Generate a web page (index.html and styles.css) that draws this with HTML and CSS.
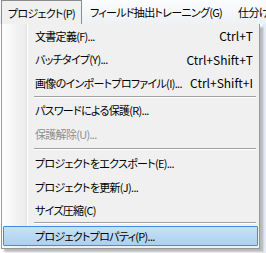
FILE: index.html
```html
<!DOCTYPE html>
<html lang="ja">
<head>
	<meta charset="UTF-8">
	<title>プロジェクトメニュー</title>
	<link rel="stylesheet" href="styles.css">
</head>
<body>
	<nav class="menubar">
		<span class="top open">プロジェクト(P)</span>
		<span class="top">フィールド抽出トレーニング(G)</span>
		<span class="top">仕分け</span>
	</nav>
	<div class="stage">
		<ul class="menu">
			<li class="item"><span>文書定義(F)...</span><span class="key">Ctrl+T</span></li>
			<li class="item"><span>バッチタイプ(Y)...</span><span class="key">Ctrl+Shift+T</span></li>
			<li class="item"><span>画像のインポートプロファイル(I)...</span><span class="key">Ctrl+Shift+I</span></li>
			<li class="sep"></li>
			<li class="item"><span>パスワードによる保護(R)...</span></li>
			<li class="item off"><span>保護解除(U)...</span></li>
			<li class="sep wide"></li>
			<li class="item"><span>プロジェクトをエクスポート(E)...</span></li>
			<li class="item"><span>プロジェクトを更新(J)...</span></li>
			<li class="item"><span>サイズ圧縮(C)</span></li>
			<li class="sep thin"></li>
			<li class="item hot"><span>プロジェクトプロパティ(P)...</span></li>
		</ul>
	</div>
</body>
</html>
```

FILE: styles.css
```css
* {
	margin: 0;
	padding: 0;
	box-sizing: border-box;
}

body {
	width: 266px;
	height: 253px;
	overflow: hidden;
	background: #fff;
	font: 11px "Noto Sans CJK JP", "Noto Sans", sans-serif;
	font-feature-settings: "palt";
	letter-spacing: -0.7px;
	color: #000;
}

.menubar {
	display: flex;
	height: 24px;
	padding-left: 1px;
	background: linear-gradient(#fbfcfd, #eef1f5);
}

.top {
	display: flex;
	align-items: center;
	padding: 0 7px;
	white-space: nowrap;
	border: 1px solid transparent;
}

.top.open {
	background: #f0f0f0;
	border-color: #8b8b8b;
	border-bottom: none;
	padding: 0 6px;
}

.stage {
	padding: 0 0 0 1px;
	height: 229px;
	background: linear-gradient(90deg, #fff 262px, #e5eef7 262px);
}

.menu {
	list-style: none;
	width: 259px;
	height: 225px;
	border: 1px solid #979797;
	border-top: none;
	padding: 0 1px;
	background: linear-gradient(90deg, #fdfdfd 0, #ececec 24px, #e2e3e3 24px, #e2e3e3 25px, #fff 25px, #fff 26px, #f0f0f0 26px);
	box-shadow: 3px 3px 2px rgba(0, 0, 0, .28);
}

.item {
	display: flex;
	justify-content: space-between;
	align-items: center;
	gap: 8px;
	height: 23.5px;
	padding: 0 4px 0 31px;
	white-space: nowrap;
	border: 1px solid transparent;
	border-radius: 1px;
}

.key {
	font-size: 12px;
	letter-spacing: 0;
}

.off {
	color: #8d8d8d;
}

.hot {
	height: 20px;
	margin-top: 1px;
	background: linear-gradient(#c8e1f7, #acd0f0);
	border-color: #3b8ee2;
}

.sep {
	height: 4px;
	margin-left: 31px;
	margin-right: 2px;
	background: linear-gradient(transparent 1px, #a0a0a0 1px, #a0a0a0 2px, #fff 2px, #fff 3px, transparent 3px);
}

.sep.wide {
	height: 6px;
	background-position: 0 1px;
	background-repeat: no-repeat;
}

.sep.thin {
	height: 3px;
	background-position: 0 -1px;
	background-repeat: no-repeat;
}
```
